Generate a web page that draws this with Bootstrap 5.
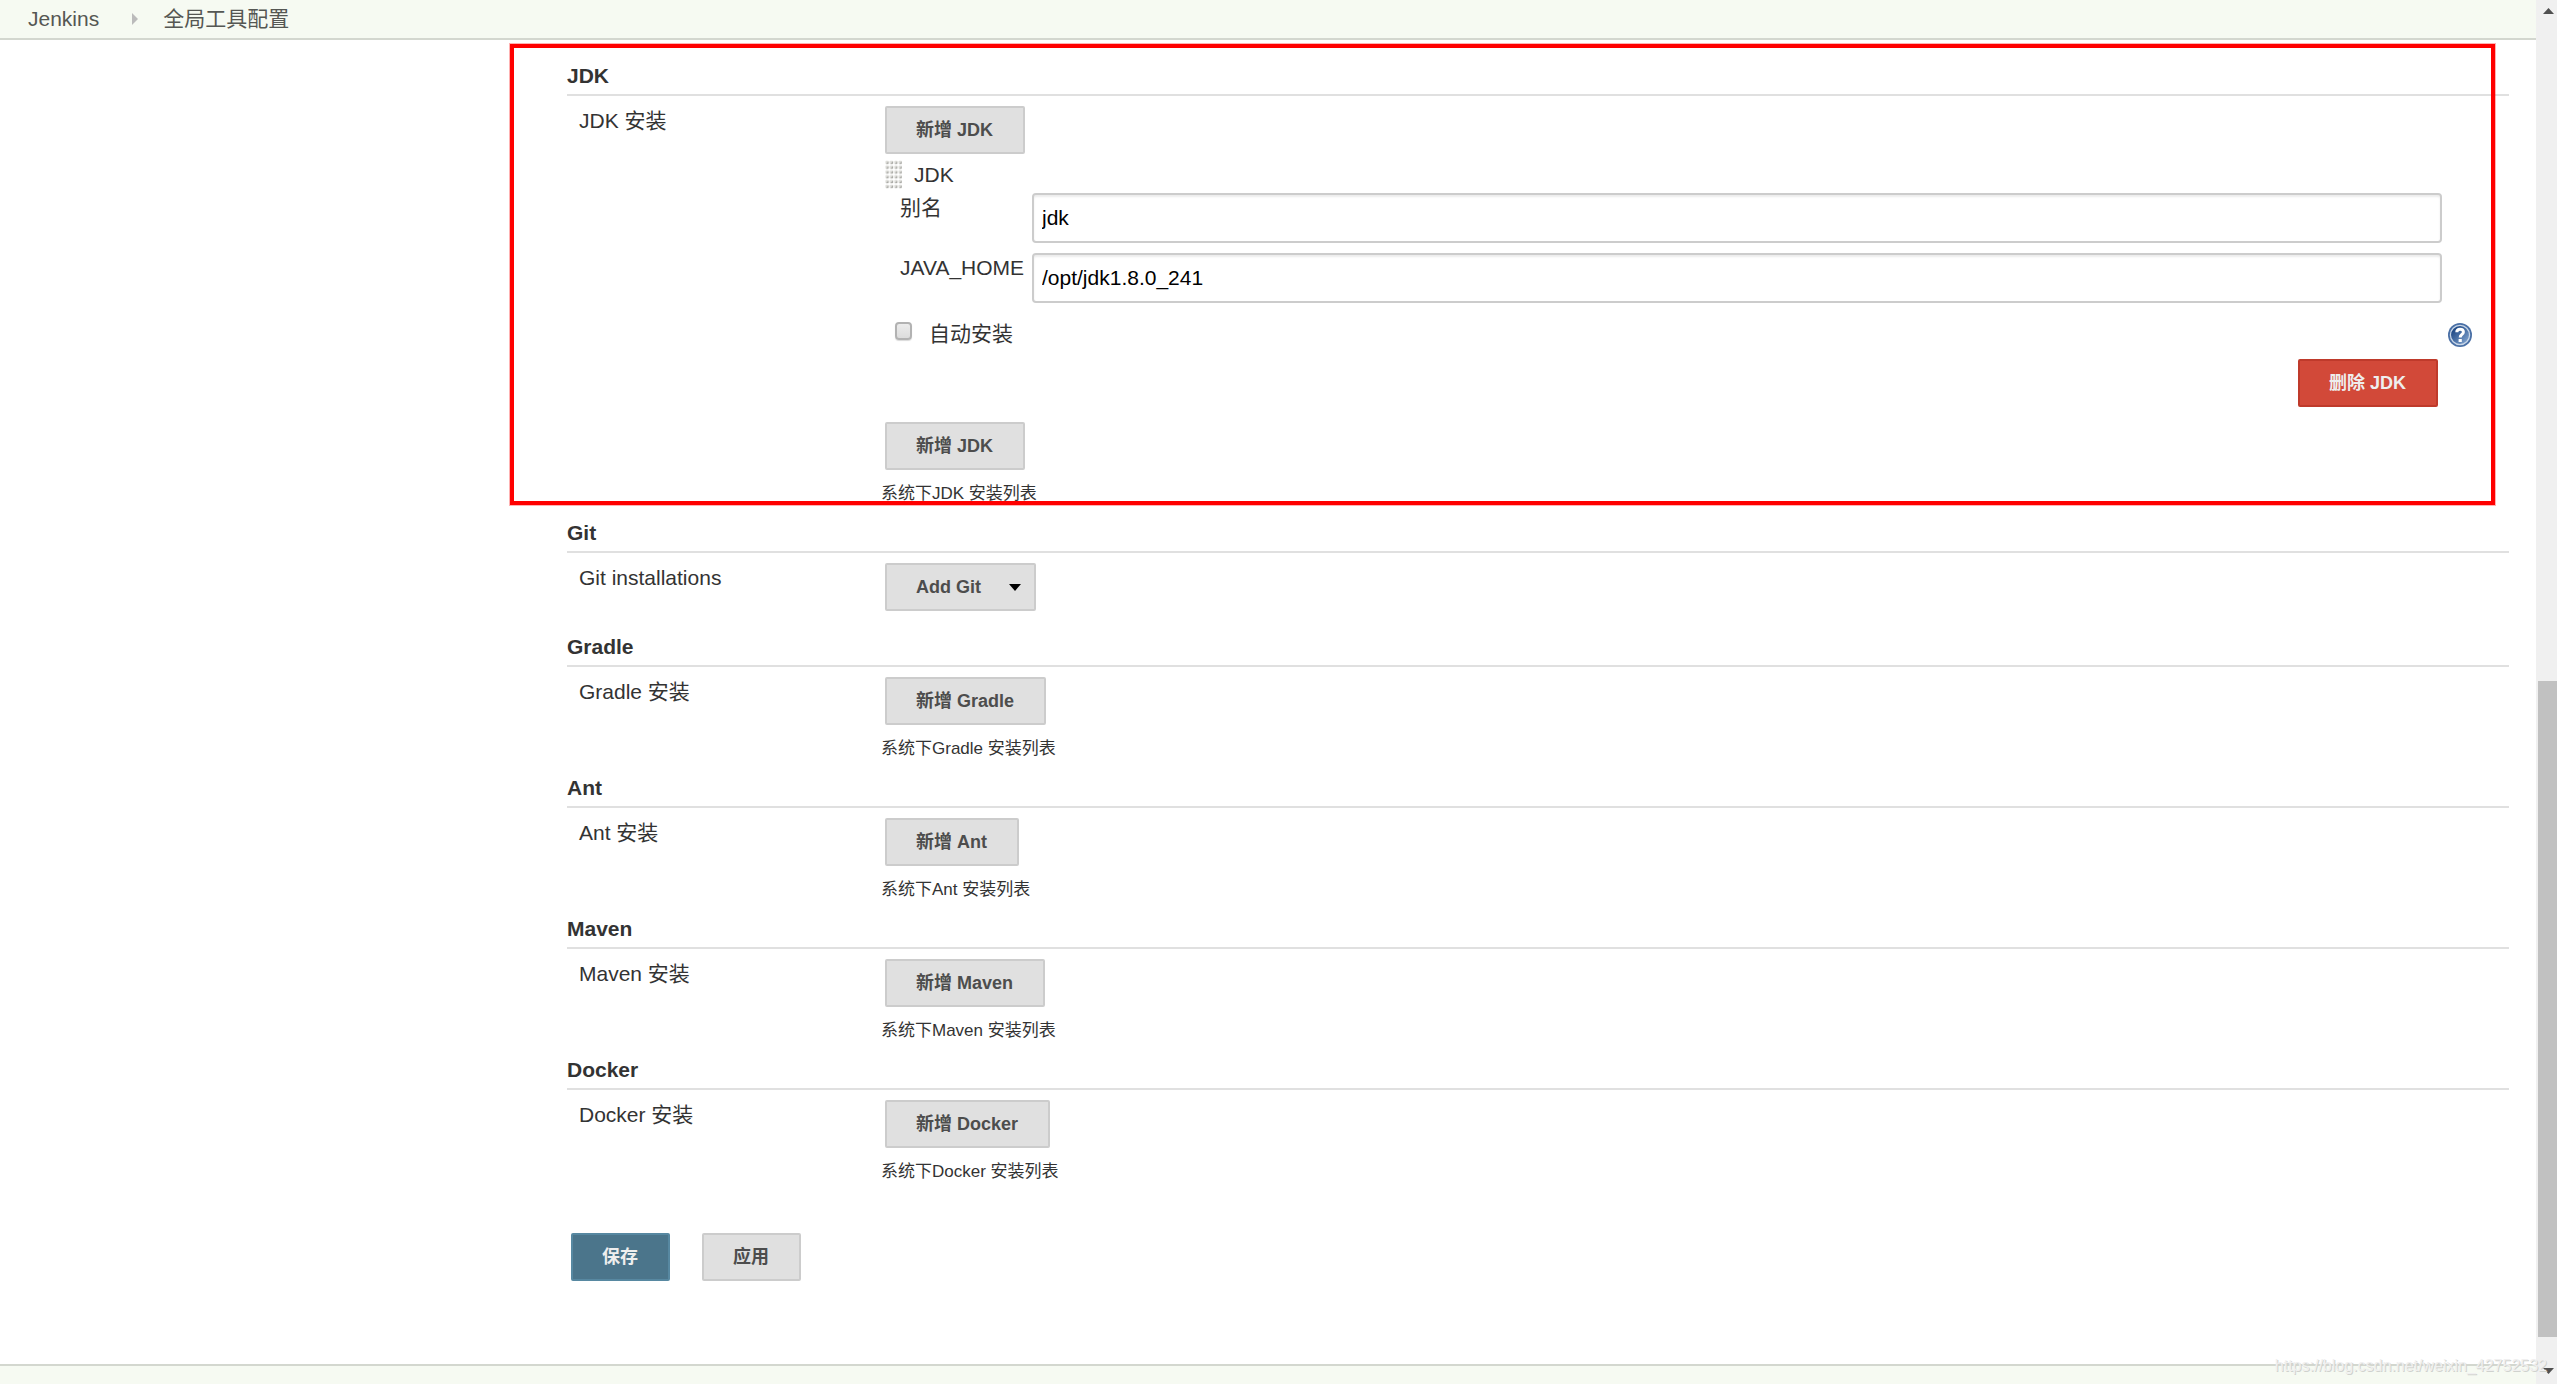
<!DOCTYPE html>
<html lang="zh-CN">
<head>
<meta charset="utf-8">
<meta name="viewport" content="width=device-width, initial-scale=1">
<title>全局工具配置 [Jenkins]</title>
<link href="https://cdn.jsdelivr.net/npm/bootstrap@5.3.0/dist/css/bootstrap.min.css" rel="stylesheet">
<style>
  body { font-family: "Liberation Sans", "Noto Sans CJK SC", sans-serif; font-size: 21px; line-height: 30px; color: #333; background: #fff; }
  .crumb-bar { height: 40px; padding: 4px 28px; background: #f6faf2; border-bottom: 2px solid #d3d7cf; line-height: 30px; }
  .crumb-bar a { color: #555753; text-decoration: none; }
  .crumb-arrow { width: 6px; height: 12px; margin: 0 25px 0 33px; }
  .side-space { flex: 0 0 567px; }
  .config-form { padding: 16px 27px 83px 0; min-width: 0; }
  .tool-title { margin: 0; padding: 5px 0 3px; font-size: 21px; line-height: 30px; font-weight: 700; border-bottom: 2px solid #e0e0e0; }
  .tool-row { padding-top: 10px; }
  .tool-name { flex: 0 0 318px; padding-left: 12px; }
  .btn-jk { height: 48px; padding: 0 30px 0 29px; font-size: 18px; line-height: 26px; font-weight: 700; border-width: 2px; border-radius: 2px;
    --bs-btn-color: #4d4d4d; --bs-btn-bg: #e0e0e0; --bs-btn-border-color: #ccc; --bs-btn-hover-bg: #d5d5d5; --bs-btn-hover-border-color: #bbb; }
  .btn-save { --bs-btn-color: #eee; --bs-btn-bg: #4b758b; --bs-btn-border-color: #5788a1; --bs-btn-hover-color: #fff; --bs-btn-hover-bg: #416578; --bs-btn-hover-border-color: #4b758b; }
  .btn-remove { --bs-btn-color: #eee; --bs-btn-bg: #d24939; --bs-btn-border-color: #bf3a2b; --bs-btn-hover-color: #fff; --bs-btn-hover-bg: #bf3a2b; --bs-btn-hover-border-color: #a93225; }
  .btn-menu { padding-right: 13px; gap: 28px; }
  .tool-note { margin: 0 0 0 -4px; padding: 11px 0 6px; font-size: 17px; line-height: 26px; }
  .grip-row { height: 39px; padding: 6px 0 3px; }
  .field-name { flex: 0 0 147px; padding-left: 15px; }
  .field-row { margin: 0 67px 10px 0; }
  .field-box { height: 50px; padding: 0 8px; font-size: 21px; color: #000; border: 2px solid #ccc; border-radius: 4px; box-shadow: inset 0 2px 2px rgba(0,0,0,.08); }
  .auto-row { height: 46px; padding: 6px 37px 0 10px; }
  .auto-tick { appearance: none; width: 17px; height: 18px; margin: 3px 17px 0 0; border: 2px solid #b2b2b2; border-radius: 4px; background: linear-gradient(#ececec, #dcdcdc); box-shadow: 0 1px 1px rgba(0,0,0,.15); }
  .auto-tick:checked { background: #4b758b; }
  .remove-row { padding: 0 71px 15px 0; }
  .red-frame { top: -12px; right: 14px; bottom: 8px; left: -57px; border: 4px solid #f00; outline: 1px solid rgba(255,0,0,.3); pointer-events: none; }
  .form-actions { gap: 32px; padding: 42px 0 0 4px; }
  .foot-bar { height: 20px; background: #f6faf2; border-top: 2px solid #d3d7cf; }
  .site-mark { right: 10px; bottom: 6px; font-size: 16px; line-height: 24px; color: #f0f0f0; text-shadow: 1px 1px 0 #d0d2ce; pointer-events: none; }
  .scroll-rail { flex: 0 0 21px; background: #f0f0f0; }
  .scroll-rail svg { flex: 0 0 21px; width: 21px; }
  .rail-before { flex: 660 1 0; }
  .rail-thumb { flex: 656 1 0; margin-left: 2px; background: #c1c1c1; }
  .rail-after { flex: 26 1 0; }
</style>
</head>
<body>
<div class="d-flex min-vh-100 position-relative">
  <div class="d-flex flex-column flex-fill">
    <nav class="crumb-bar d-flex align-items-center" aria-label="breadcrumb">
      <a href="#">Jenkins</a>
      <svg class="crumb-arrow" viewBox="0 0 6 12" aria-hidden="true"><path d="M0 0L6 6L0 12Z" fill="#bbb"/></svg>
      <a href="#">全局工具配置</a>
    </nav>

    <main class="d-flex flex-fill">
      <div class="side-space"></div>
      <form class="config-form flex-fill">
        <section class="position-relative">
          <h2 class="tool-title">JDK</h2>
          <div class="tool-row d-flex">
            <div class="tool-name">JDK 安装</div>
            <div class="flex-fill">
              <button type="button" class="btn btn-jk d-block">新增 JDK</button>
              <div class="grip-row d-flex">
                <svg width="17" height="29" viewBox="0 0 17 29" aria-hidden="true">
                  <defs><pattern id="dots" width="4.4" height="4.8" patternUnits="userSpaceOnUse"><rect x=".4" y=".8" width="3.4" height="3.4" rx="1" fill="#dededa"/><path d="M1 3.900L3.600 1.300V3.900Z" fill="#a9a9a5"/></pattern></defs>
                  <rect width="17" height="29" fill="url(#dots)"/>
                </svg>
                <span class="ms-2 ps-1">JDK</span>
              </div>
              <div class="field-row d-flex">
                <label class="field-name" for="jdkName">别名</label>
                <input class="form-control field-box" id="jdkName" type="text" value="jdk">
              </div>
              <div class="field-row d-flex">
                <label class="field-name" for="javaHome">JAVA_HOME</label>
                <input class="form-control field-box" id="javaHome" type="text" value="/opt/jdk1.8.0_241">
              </div>
              <div class="auto-row d-flex">
                <input class="auto-tick" id="autoInstall" type="checkbox">
                <label for="autoInstall">自动安装</label>
                <a href="#" class="ms-auto d-block" aria-label="帮助">
                  <svg class="d-block mt-1" width="24" height="24" viewBox="0 0 24 24" aria-hidden="true">
                    <defs><linearGradient id="orb" x1="0" y1="0" x2="1" y2="1"><stop offset="0.2" stop-color="#204a87"/><stop offset="1" stop-color="#8fb0d8"/></linearGradient></defs>
                    <circle cx="12" cy="12" r="12" fill="#4a70a6"/>
                    <circle cx="12" cy="12" r="9.6" fill="url(#orb)" stroke="#c9d7e8" stroke-width="1.3"/>
                    <path d="M8.8 9.200Q8.800 6.200 12 6.200Q15.400 6.200 15.400 9Q15.400 10.600 13.600 11.800Q12.200 12.800 12.200 14.600" fill="none" stroke="#fff" stroke-width="3"/>
                    <rect x="10.600" y="16" width="3.200" height="3" fill="#fff"/>
                  </svg>
                </a>
              </div>
              <div class="remove-row d-flex justify-content-end">
                <button type="button" class="btn btn-jk btn-remove">删除 JDK</button>
              </div>
              <button type="button" class="btn btn-jk d-block">新增 JDK</button>
              <p class="tool-note">系统下JDK 安装列表</p>
            </div>
          </div>
          <div class="red-frame position-absolute"></div>
        </section>

        <section class="pb-3">
          <h2 class="tool-title">Git</h2>
          <div class="tool-row d-flex">
            <div class="tool-name">Git installations</div>
            <button type="button" class="btn btn-jk btn-menu d-flex align-items-center">Add Git
              <svg width="12" height="7" viewBox="0 0 12 7" aria-hidden="true"><path d="M0 0H12L6 7Z" fill="#000"/></svg>
            </button>
          </div>
        </section>

        <section>
          <h2 class="tool-title">Gradle</h2>
          <div class="tool-row d-flex">
            <div class="tool-name">Gradle 安装</div>
            <div>
              <button type="button" class="btn btn-jk d-block">新增 Gradle</button>
              <p class="tool-note">系统下Gradle 安装列表</p>
            </div>
          </div>
        </section>

        <section>
          <h2 class="tool-title">Ant</h2>
          <div class="tool-row d-flex">
            <div class="tool-name">Ant 安装</div>
            <div>
              <button type="button" class="btn btn-jk d-block">新增 Ant</button>
              <p class="tool-note">系统下Ant 安装列表</p>
            </div>
          </div>
        </section>

        <section>
          <h2 class="tool-title">Maven</h2>
          <div class="tool-row d-flex">
            <div class="tool-name">Maven 安装</div>
            <div>
              <button type="button" class="btn btn-jk d-block">新增 Maven</button>
              <p class="tool-note">系统下Maven 安装列表</p>
            </div>
          </div>
        </section>

        <section>
          <h2 class="tool-title">Docker</h2>
          <div class="tool-row d-flex">
            <div class="tool-name">Docker 安装</div>
            <div>
              <button type="button" class="btn btn-jk d-block">新增 Docker</button>
              <p class="tool-note">系统下Docker 安装列表</p>
            </div>
          </div>
        </section>

        <div class="form-actions d-flex">
          <button type="submit" class="btn btn-jk btn-save">保存</button>
          <button type="button" class="btn btn-jk">应用</button>
        </div>
      </form>
    </main>

    <footer class="foot-bar"></footer>
  </div>

  <div class="scroll-rail d-flex flex-column" aria-hidden="true">
    <svg height="21" viewBox="0 0 21 21"><path d="M7 14L12.500 8L18 14Z" fill="#505050"/></svg>
    <div class="rail-before"></div>
    <div class="rail-thumb"></div>
    <div class="rail-after"></div>
    <svg height="21" viewBox="0 0 21 21"><path d="M7 5H18L12.500 11Z" fill="#505050"/></svg>
  </div>
  <div class="site-mark position-absolute">https://blog.csdn.net/weixin_42752532</div>
</div>
<script src="https://cdn.jsdelivr.net/npm/bootstrap@5.3.0/dist/js/bootstrap.bundle.min.js"></script>
</body>
</html>
